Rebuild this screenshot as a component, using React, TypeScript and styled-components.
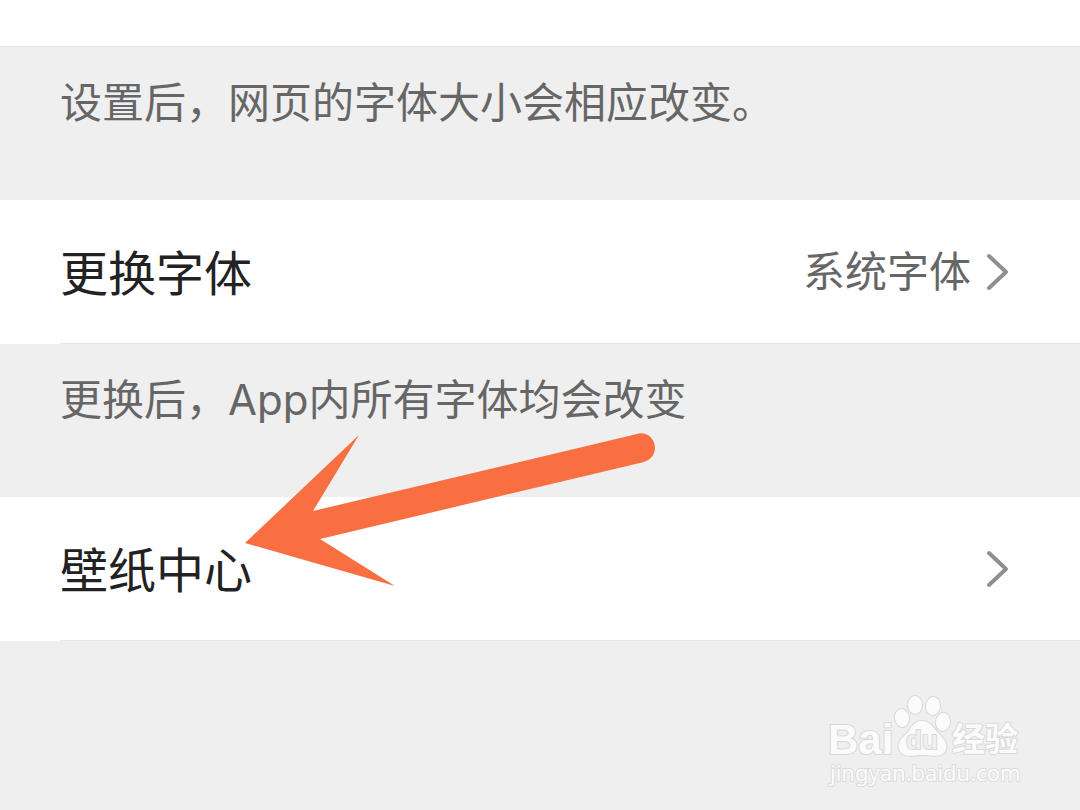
import React from "react";
import styled, { createGlobalStyle } from "styled-components";

const GlobalStyle = createGlobalStyle`
  * { box-sizing: border-box; }
  body {
    margin: 0;
    background: #efefef;
    font-family: Inter, "Noto Sans CJK SC", sans-serif;
  }
`;

const Page = styled.main`
  display: flex;
  flex-direction: column;
  min-height: 100vh;
`;

const PreviousRow = styled.div`
  height: 47px;
  background: #fff;
  border-bottom: 1px solid #e6e6e6;
`;

const Hint = styled.p`
  margin: 0;
  padding: 26px 60px 67px;
  font-size: 42px;
  line-height: 60px;
  color: #666;
`;

const Row = styled.button`
  position: relative;
  display: flex;
  width: 100%;
  height: 144px;
  padding: 0 0 0 60px;
  border: 0;
  background: #fff;
  font: inherit;
  text-align: left;
  cursor: pointer;
`;

const RowBody = styled.span`
  flex: 1;
  display: flex;
  align-items: center;
  gap: 14px;
  height: 144px;
  padding-right: 70px;
  border-bottom: 1px solid #e6e6e6;
`;

const RowTitle = styled.span`
  flex: 1;
  padding-top: 4px;
  font-size: 48px;
  line-height: 72px;
  color: #222;
`;

const RowValue = styled.span`
  font-size: 42px;
  line-height: 60px;
  color: #666;
`;

const Pointer = styled.svg`
  position: absolute;
  left: 240px;
  top: -67px;
  pointer-events: none;
`;

const Footer = styled.footer`
  flex: 1;
  display: flex;
  justify-content: flex-end;
  align-items: flex-end;
  padding: 48px 56px 28px;
`;

const Watermark = styled.div`
  display: flex;
  flex-direction: column;
  width: 198px;
`;

const Logo = styled.svg`
  overflow: visible;
`;

const SiteAddress = styled.span`
  padding-left: 4px;
  font-family: "Noto Sans", sans-serif;
  font-size: 22px;
  line-height: 20px;
  color: #fbfbfb;
  -webkit-text-stroke: 2px #dcdcdc;
  paint-order: stroke fill;
`;

const Chevron = () => (
  <svg width="25" height="40" viewBox="0 0 25 40" fill="none" aria-hidden="true">
    <path
      d="M4 4L21 20L4 36"
      stroke="#8f8f8f"
      strokeWidth="4"
      strokeLinecap="round"
      strokeLinejoin="round"
    />
  </svg>
);

const Arrow = () => (
  <Pointer width="420" height="160" viewBox="0 0 420 160" aria-hidden="true">
    <path
      d="M5 113L119 5L73 81L397 4C407 1 415 9 415 18C415 25 410 30 404 32L80 109L155 156Z"
      fill="#fa6f42"
    />
  </Pointer>
);

const BaiduLogo = () => (
  <Logo
    width="198"
    height="68"
    viewBox="0 0 198 68"
    fill="#fbfbfb"
    stroke="#d8d8d8"
    strokeWidth="2"
    strokeLinejoin="round"
    paintOrder="stroke"
    role="img"
    aria-label="Baidu 经验"
  >
    <text x="2" y="60" fontFamily="Liberation Sans, sans-serif" fontWeight="700" fontSize="42">
      Bai
    </text>
    <ellipse cx="76" cy="24" rx="7" ry="9" transform="rotate(-8 76 24)" />
    <ellipse cx="89" cy="11" rx="7" ry="9" />
    <ellipse cx="107" cy="12" rx="7" ry="9" transform="rotate(6 107 12)" />
    <ellipse cx="117" cy="28" rx="7" ry="9" transform="rotate(8 117 28)" />
    <path d="M96 27C88 27 86 33 81 39C76 44 71 48 73 55C76 65 87 61 97 61C107 61 117 65 120 55C122 48 117 44 112 39C107 33 104 27 96 27Z" />
    <text
      x="80"
      y="55"
      fontFamily="Liberation Sans, sans-serif"
      fontWeight="700"
      fontSize="26"
      fill="#efefef"
    >
      du
    </text>
    <text x="126" y="57" fontFamily="Noto Sans CJK SC, sans-serif" fontWeight="700" fontSize="33">
      经验
    </text>
  </Logo>
);

export default function App() {
  return (
    <>
      <GlobalStyle />
      <Page>
        <PreviousRow />
        <Hint>设置后，网页的字体大小会相应改变。</Hint>
        <Row type="button">
          <RowBody>
            <RowTitle>更换字体</RowTitle>
            <RowValue>系统字体</RowValue>
            <Chevron />
          </RowBody>
        </Row>
        <Hint>更换后，App内所有字体均会改变</Hint>
        <Row type="button">
          <RowBody>
            <RowTitle>壁纸中心</RowTitle>
            <Chevron />
          </RowBody>
          <Arrow />
        </Row>
        <Footer>
          <Watermark>
            <BaiduLogo />
            <SiteAddress>jingyan.baidu.com</SiteAddress>
          </Watermark>
        </Footer>
      </Page>
    </>
  );
}
